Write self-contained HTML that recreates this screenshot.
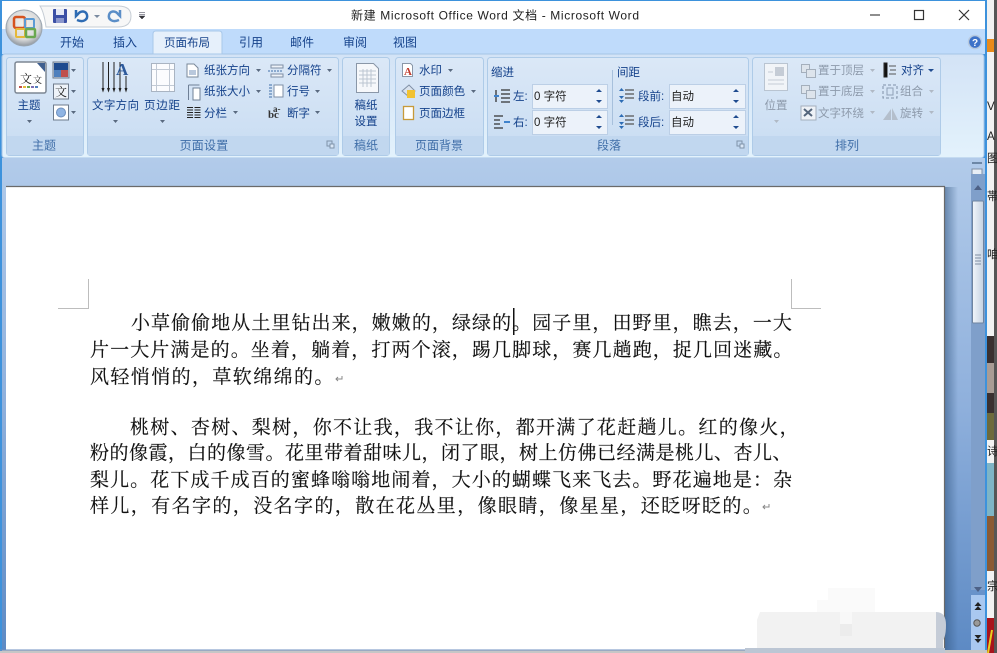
<!DOCTYPE html>
<html><head><meta charset="utf-8"><style>
html,body{margin:0;padding:0;width:997px;height:653px;overflow:hidden;background:#c8c8c8}
svg{position:absolute;left:0;top:0;display:block}
text{font-family:"Liberation Sans","Noto Sans CJK SC",sans-serif;font-size:11.5px;fill:#15428b}
.k{fill:#222}.g{fill:#8d9aab}.l{fill:#3f6ea8;font-size:12px}.c{text-anchor:middle}
.d{font-family:"Liberation Serif","Noto Serif CJK SC",serif;font-size:19px;fill:#111;stroke:#111;stroke-width:.15px}
</style></head><body>
<svg width="997" height="653" viewBox="0 0 997 653" style="filter:blur(.3px)">
<defs>
<linearGradient id="rb" x1="0" y1="0" x2="0" y2="1"><stop offset="0" stop-color="#d3e3f6"/><stop offset="1" stop-color="#e3f2fc"/></linearGradient>
<linearGradient id="gb" x1="0" y1="0" x2="0" y2="1"><stop offset="0" stop-color="#dbe8f7"/><stop offset="1" stop-color="#c8dcf2"/></linearGradient>
<linearGradient id="bg" x1="0" y1="0" x2="0" y2="1"><stop offset="0" stop-color="#b2cbea"/><stop offset=".5" stop-color="#8fb0dc"/><stop offset="1" stop-color="#5d8ac4"/></linearGradient>
<linearGradient id="ed" x1="0" y1="0" x2="1" y2="0"><stop offset="0" stop-color="#31557f" stop-opacity=".55"/><stop offset=".5" stop-color="#31557f" stop-opacity="0"/></linearGradient>
<linearGradient id="th" x1="0" y1="0" x2="1" y2="0"><stop offset="0" stop-color="#f1f5fa"/><stop offset="1" stop-color="#c5d2e2"/></linearGradient>
<radialGradient id="ob" cx=".5" cy=".4" r=".6"><stop offset="0" stop-color="#f4f3ee"/><stop offset=".7" stop-color="#d9dadb"/><stop offset="1" stop-color="#8f969e"/></radialGradient>
</defs>

<!-- right-hand background strip -->
<rect x="986" y="0" width="8" height="653" fill="#f2f2f2"/>
<rect x="986" y="39" width="8" height="13" fill="#e88a1a"/>
<rect x="986" y="336" width="8" height="77" fill="#3a3030"/>
<rect x="986" y="363" width="8" height="30" fill="#a99c95"/>
<rect x="986" y="413" width="8" height="27" fill="#6d6a3c"/>
<rect x="986" y="463" width="8" height="53" fill="#7fb5c6"/>
<rect x="986" y="516" width="8" height="55" fill="#8a5a34"/>
<rect x="986" y="618" width="8" height="35" fill="#a8141c"/>
<path d="M988 653L992 630" stroke="#e8d020" stroke-width="2"/>
<rect x="994" y="0" width="3" height="653" fill="#565656"/>
<text x="987" y="110" class="k" font-size="11">V</text><text x="987" y="140" class="k">A</text><text x="987" y="162" class="k">图</text><text x="987" y="200" class="k">帯</text><text x="987" y="258" class="k">咱</text><text x="987" y="455" class="k">诗</text><text x="987" y="590" class="k">宗</text>

<!-- window -->
<rect x="0" y="0" width="987" height="651" fill="#3d92dc"/>
<rect x="2" y="1" width="983" height="29" fill="#fff"/>
<rect x="2" y="29" width="983" height="25" fill="#bfdbfb"/>
<rect x="2" y="54" width="982" height="104" rx="3" fill="url(#rb)" stroke="#a5c4e6"/>
<rect x="2" y="158" width="983" height="492" fill="url(#bg)"/>
<rect x="945" y="187" width="26" height="463" fill="url(#ed)"/>

<!-- title -->
<text x="351" y="19.500" class="k" font-size="12" textLength="288" lengthAdjust="spacing" style="font-size:12px;fill:#222">新建 Microsoft Office Word 文档 - Microsoft Word</text>
<path d="M870 15h10" stroke="#444" stroke-width="1.200"/>
<rect x="914.500" y="10.500" width="9" height="9" fill="none" stroke="#333" stroke-width="1.200"/>
<path d="M959 10l10 10M969 10l-10 10" stroke="#333" stroke-width="1.200"/>

<!-- QAT -->
<path d="M40 6H118Q131 6 131 16Q131 27 118 27H46Q44 12 40 6Z" fill="#f7f7f7" stroke="#c5ccd4"/>
<rect x="53" y="9" width="14" height="14" rx="1" fill="#3b4fa5"/><rect x="56" y="9" width="8" height="6" fill="#e5e9f5"/><rect x="56" y="18" width="8" height="5" fill="#8b97cc"/>
<path d="M77 20c7 3 11-1 10-5s-6-5-9-1l-2 2v-6" fill="none" stroke="#2f6cb3" stroke-width="2.500"/>
<path d="M94 15h6l-3 3z" fill="#7a8aa0"/>
<path d="M119 20c-7 3-11-1-10-5s6-5 9-1l2 2v-6" fill="none" stroke="#5b8ec7" stroke-width="2.500"/>
<path d="M139 12.500h6M139 14.500h6M139 16h6l-3 3z" fill="#333" stroke="#334" stroke-width=".5"/>

<!-- office button -->
<circle cx="24" cy="28" r="18" fill="url(#ob)" stroke="#9aa5b0"/>
<rect x="14" y="17" width="11" height="11" rx="2" fill="none" stroke="#d6531f" stroke-width="2.500"/>
<rect x="25" y="19" width="9" height="9" rx="1" fill="none" stroke="#5b9bd5" stroke-width="2"/>
<rect x="16" y="29" width="9" height="8" rx="1" fill="none" stroke="#e5b83a" stroke-width="2"/>
<rect x="26" y="29" width="9" height="8" rx="1" fill="none" stroke="#6aa84f" stroke-width="2.500"/>

<!-- tabs -->
<path d="M153 54V34Q153 31 156 31H219Q222 31 222 34V54Z" fill="#e6f0fb" stroke="#a8c8ea"/>
<g style="font-size:12px">
<text x="60" y="46.500" style="font-size:12px">开始</text><text x="113" y="46.500" style="font-size:12px">插入</text>
<text x="164" y="46.500" style="font-size:11.500px">页面布局</text><text x="239" y="46.500" style="font-size:12px">引用</text>
<text x="290" y="46.500" style="font-size:12px">邮件</text><text x="343" y="46.500" style="font-size:12px">审阅</text><text x="393" y="46.500" style="font-size:12px">视图</text>
</g>
<circle cx="975" cy="42" r="6.500" fill="#3d72c8" stroke="#b7c9de" stroke-width="1.500"/><text x="975" y="46" class="c" style="fill:#fff;font-size:10px;font-weight:bold">?</text>

<!-- groups -->
<g stroke="#aecbe8" fill="url(#gb)">
<rect x="6.500" y="57.500" width="77" height="98" rx="3"/>
<rect x="87.500" y="57.500" width="251" height="98" rx="3"/>
<rect x="342.500" y="57.500" width="47" height="98" rx="3"/>
<rect x="395.500" y="57.500" width="88" height="98" rx="3"/>
<rect x="487.500" y="57.500" width="261" height="98" rx="3"/>
<rect x="752.500" y="57.500" width="188" height="98" rx="3"/>
</g>
<g fill="#c1d7ef">
<rect x="7" y="136" width="76" height="19"/><rect x="88" y="136" width="250" height="19"/><rect x="343" y="136" width="46" height="19"/><rect x="396" y="136" width="87" height="19"/><rect x="488" y="136" width="260" height="19"/><rect x="753" y="136" width="187" height="19"/>
</g>
<text x="44" y="149.500" class="l c">主题</text><text x="204" y="149.500" class="l c" style="letter-spacing:.2px">页面设置</text><text x="366" y="149.500" class="l c">稿纸</text><text x="439" y="149.500" class="l c">页面背景</text><text x="609" y="149.500" class="l c">段落</text><text x="847" y="149.500" class="l c">排列</text>
<g fill="none" stroke="#7f93aa"><rect x="327" y="141" width="5" height="5"/><rect x="330" y="144" width="4" height="4" fill="#dbe8f7"/><rect x="737" y="141" width="5" height="5"/><rect x="740" y="144" width="4" height="4" fill="#dbe8f7"/></g>

<!-- group 1 -->
<rect x="15" y="62" width="31" height="31" rx="2" fill="#fff" stroke="#7d8794" stroke-width="1.500"/>
<path d="M37 63h8v9z" fill="#3f5f8f"/>
<text x="20" y="83" class="k" style="font-family:'Liberation Serif','Noto Serif CJK SC',serif;font-size:12px">文</text><text x="33" y="83" class="k" style="font-family:'Liberation Serif','Noto Serif CJK SC',serif;font-size:9px">文</text>
<path d="M19 87h3" stroke="#c0504d" stroke-width="2"/><path d="M23 87h3" stroke="#e5b83a" stroke-width="2"/><path d="M27 87h3" stroke="#6aa84f" stroke-width="2"/><path d="M31 87h3" stroke="#7f6fb5" stroke-width="2"/><path d="M35 87h3" stroke="#4f80bd" stroke-width="2"/>
<text x="29" y="109" class="c">主题</text>
<rect x="53" y="62" width="16" height="16" fill="#c9d6e5" stroke="#6e7b8c"/><rect x="54" y="63" width="7" height="7" fill="#1f4b8f"/><rect x="61" y="63" width="7" height="7" fill="#1f4b8f"/><rect x="54" y="70" width="7" height="7" fill="#4f80bd"/><rect x="61" y="70" width="7" height="7" fill="#c0504d"/>
<rect x="53.500" y="84" width="15" height="15" fill="#eef3f9" stroke="#6e7b8c"/><text x="55" y="96" class="k" style="font-family:'Noto Serif CJK SC',serif;font-size:12px">文</text>
<rect x="53.500" y="105" width="15" height="15" fill="#fff" stroke="#6e7b8c"/><circle cx="61" cy="112.500" r="4.500" fill="#8fb4e3" stroke="#6d8fbd"/>

<!-- group 2 -->
<path d="M103 62v28M108.500 62v28M114 62v28M120 62v28M126 76v14M102 88l1 3 1-3M107.500 88l1 3 1-3M113 88l1 3 1-3M119 88l1 3 1-3M125 88l1 3 1-3" stroke="#222" fill="none"/>
<text x="116" y="75" style="font-family:'Liberation Serif',serif;font-size:17px;font-weight:bold;fill:#2d5a9c">A</text>
<rect x="151.500" y="63.500" width="23" height="28" fill="#fbfcfe" stroke="#a9b4c2"/><path d="M156.500 64v27M169.500 64v27M152 69.500h22M152 85.500h22" stroke="#c2cad5"/>
<text x="92" y="109" textLength="47" style="font-size:11.500px">文字方向</text><text x="144" y="109" textLength="36" style="font-size:11.500px">页边距</text>
<text x="204" y="74">纸张方向</text><text x="204" y="95">纸张大小</text><text x="204" y="117">分栏</text>
<text x="287" y="74">分隔符</text><text x="287" y="95">行号</text><text x="287" y="117">断字</text>
<path d="M187 64h7l4 4v9h-11z" fill="#fff" stroke="#7a8899"/><path d="M189 70h7v5h-7z" fill="#b9c8dc"/>
<path d="M188.500 85h11M188.500 85v15M193 88h7v12h-7z" fill="#fff" stroke="#6f8096"/>
<path d="M187 107.500h6M187 110h6M187 112.500h6M187 115h6M187 117.500h6M194.500 107.500h6M194.500 110h6M194.500 112.500h6M194.500 115h6M194.500 117.500h6" stroke="#222"/>
<path d="M271 65h12v3h-12zM271 74h12v3h-12z" fill="#eef2f8" stroke="#7f8fa5"/><path d="M268 71h15" stroke="#3f6ea8" stroke-dasharray="2 1"/>
<rect x="274" y="85" width="9" height="12" fill="#fff" stroke="#7f8fa5"/><path d="M269 85h3M269 88h3M269 91h3M269 94h3M269 97h3" stroke="#3f6ea8"/>
<text x="268" y="118" style="font-family:'Liberation Serif',serif;font-size:11px;font-weight:bold;fill:#333">b</text><text x="274" y="118" style="font-family:'Liberation Serif',serif;font-size:11px;font-weight:bold;fill:#333">c</text><text x="273" y="112" style="font-family:'Liberation Serif',serif;font-size:9px;font-weight:bold;fill:#333">a-</text>

<!-- group 3 -->
<path d="M356.500 63.500h17l5 5v24h-22z" fill="#f6f8fb" stroke="#8a97a8"/><path d="M359 71h17M359 75h17M359 79h17M359 83h17M363 69v18M367 69v18M371 69v18" stroke="#bcc6d2"/>
<text x="366" y="109" class="c">稿纸</text><text x="366" y="125" class="c">设置</text>

<!-- group 4 -->
<path d="M402.500 63.500h8l2 2v11h-10z" fill="#fff" stroke="#8a97a8"/><text x="404" y="75" style="font-family:'Liberation Serif',serif;font-size:11px;font-weight:bold;fill:#c0392b">A</text>
<path d="M402 91l7-6 6 6-6 6z" fill="#d9e2ee" stroke="#7f8fa5"/><rect x="407" y="90" width="8" height="8" fill="#f1c232"/>
<rect x="403.500" y="106.500" width="10" height="13" fill="#fff" stroke="#c79a3a" stroke-width="1.300"/>
<text x="419" y="74">水印</text><text x="419" y="95" style="letter-spacing:.05px">页面颜色</text><text x="419" y="117">页面边框</text>

<!-- group 5 -->
<text x="491" y="76">缩进</text><text x="617" y="76">间距</text>
<path d="M612.500 70v55" stroke="#a7c0dc"/>
<text x="513" y="100">左:</text><text x="513" y="126">右:</text><text x="638" y="100">段前:</text><text x="638" y="126">段后:</text>
<g fill="#ecf2fa" stroke="#bccfe6"><rect x="532.500" y="84.500" width="75" height="24"/><rect x="532.500" y="110.500" width="75" height="24"/><rect x="669.500" y="84.500" width="76" height="24"/><rect x="669.500" y="110.500" width="76" height="24"/></g>
<text x="534" y="100" class="k">0 字符</text><text x="534" y="126" class="k">0 字符</text><text x="671" y="100" class="k">自动</text><text x="671" y="126" class="k">自动</text>
<path d="M596 92h6l-3-3zM596 100h6l-3 3zM596 118h6l-3-3zM596 126h6l-3 3zM733 92h6l-3-3zM733 100h6l-3 3zM733 118h6l-3-3zM733 126h6l-3 3z" fill="#1f4b8f"/>
<path d="M501 90h9M501 94h9M501 98h9M501 102h9M496 90v12" stroke="#333" stroke-width="1.300"/><path d="M494 96h5" stroke="#3f82cc" stroke-width="2"/>
<path d="M494 116h9M494 120h6M494 124h6M494 128h9" stroke="#333" stroke-width="1.300"/><path d="M504 122h6" stroke="#3f82cc" stroke-width="2"/>
<path d="M625 90h9M625 94h9M625 98h9M625 116h9M625 120h9M625 124h9" stroke="#555" stroke-width="1.300"/>
<path d="M619 91l2.500-3 2.500 3zM619 96l2.500 3 2.500-3zM619 100l2.500 3 2.500-3zM619 117l2.500-3 2.500 3zM619 122l2.500 3 2.500-3zM619 126l2.500 3 2.500-3z" fill="#2d6cb4"/>

<!-- group 6 -->
<rect x="764.500" y="63.500" width="23" height="27" fill="#f1f4f8" stroke="#b9c4d1"/><rect x="775" y="67" width="9" height="9" fill="#c5ccd6"/><path d="M768 80h16M768 84h16M768 72h5" stroke="#c5ccd6"/>
<g fill="#dde4ec" stroke="#a4afbc"><rect x="801.500" y="64.500" width="8" height="8"/><rect x="806.500" y="69.500" width="9" height="8"/><rect x="801.500" y="85.500" width="8" height="8"/><rect x="806.500" y="90.500" width="9" height="8"/></g>
<rect x="801" y="106" width="15" height="14" fill="#eef2f7" stroke="#a4afbc"/><path d="M804 109l8 7M812 109l-8 7" stroke="#54657c" stroke-width="2"/>
<g class="g"><text x="776" y="109" class="c g">位置</text><text x="818" y="74" class="g">置于顶层</text><text x="818" y="95" class="g">置于底层</text><text x="818" y="117" class="g">文字环绕</text><text x="900" y="95" class="g">组合</text><text x="900" y="117" class="g">旋转</text></g>
<text x="901" y="74">对齐</text>
<path d="M885 63v14M884 63h3v14h-3z" stroke="#222"/><path d="M889 66h7M889 74h7M890 70h6" stroke="#555"/>
<rect x="883" y="85" width="14" height="13" fill="none" stroke="#7f90a8" stroke-dasharray="3 2"/><path d="M887 88h6v7h-6z" fill="none" stroke="#8fa0b6"/>
<path d="M883 120l8-11v11zM892 108l6 12h-6z" fill="#b4bfcc"/>

<!-- dropdown arrows -->
<g fill="#5a6a80">
<path d="M27 120h5l-2.500 3zM71 69h5l-2.500 3zM71 90h5l-2.500 3zM71 111h5l-2.500 3zM113 120h5l-2.500 3zM160 120h5l-2.500 3zM256 69h5l-2.500 3zM256 90h5l-2.500 3zM233 111h5l-2.500 3zM327 69h5l-2.500 3zM315 90h5l-2.500 3zM315 111h5l-2.500 3zM448 69h5l-2.500 3zM471 90h5l-2.500 3z"/>
</g>
<path d="M774 120h5l-2.500 3zM870 69h5l-2.500 3zM870 90h5l-2.500 3zM870 111h5l-2.500 3zM929 90h5l-2.500 3zM929 111h5l-2.500 3z" fill="#b0b9c5"/>
<path d="M928 69h6l-3 3z" fill="#1f4b8f"/>

<!-- page -->
<rect x="6" y="186" width="939" height="470" fill="#fff"/>
<path d="M6 186.500H945M944.500 186V650" stroke="#6a6a6a" stroke-width="1.200"/>
<path d="M58 308.500H88.500V279M791.500 279V308.500H821" fill="none" stroke="#bdbdbd"/>

<text class="d" x="131" y="329" style="letter-spacing:1.060px">小草偷偷地从土里钻出来，嫩嫩的，绿绿的。园子里，田野里，瞧去，一大</text>
<text class="d" x="90" y="356" style="letter-spacing:1.100px">片一大片满是的。坐着，躺着，打两个滚，踢几脚球，赛几趟跑，捉几回迷藏。</text>
<text class="d" x="90" y="383" style="letter-spacing:1.400px">风轻悄悄的，草软绵绵的。</text>
<text class="d" x="130" y="433.500" style="letter-spacing:1.300px">桃树、杏树、梨树，你不让我，我不让你，都开满了花赶趟儿。红的像火，</text>
<text class="d" x="90" y="459" style="letter-spacing:.500px">粉的像霞，白的像雪。花里带着甜味儿，闭了眼，树上仿佛已经满是桃儿、杏儿、</text>
<text class="d" x="90" y="486" style="letter-spacing:1.090px">梨儿。花下成千成百的蜜蜂嗡嗡地闹着，大小的蝴蝶飞来飞去。野花遍地是：杂</text>
<text class="d" x="90" y="512" style="letter-spacing:1.400px">样儿，有名字的，没名字的，散在花丛里，像眼睛，像星星，还眨呀眨的。</text>
<path d="M342 376v3h-6M338 377l-2 2 2 2M769 504v3h-6M765 505l-2 2 2 2" fill="none" stroke="#888"/>
<rect x="513" y="308" width="1.500" height="27" fill="#111"/>

<!-- scrollbar -->
<path d="M972 163h10" stroke="#56708f" stroke-width="1.500"/>
<rect x="972" y="169" width="10" height="9" fill="#e8eef5" stroke="#7e8fa5"/>
<rect x="971" y="174" width="14" height="416" fill="#7f9fca"/>
<rect x="971" y="174" width="14" height="26" fill="#7f9fca"/>
<path d="M974 190h8l-4-5z" fill="#4d6186"/>
<rect x="972.500" y="201" width="11" height="122" rx="1" fill="url(#th)" stroke="#6f84a0"/>
<path d="M975 255h6M975 258h6M975 261h6M975 264h6" stroke="#7f8ea3"/>
<path d="M974 587h8l-4 5z" fill="#4d6186"/>
<rect x="971" y="595" width="14" height="55" fill="#a9c8f0"/>
<path d="M974.500 610h7l-3.500-4zM974.500 606h7l-3.500-4z" fill="#222"/>
<circle cx="977" cy="623" r="3.200" fill="#999" stroke="#555"/>
<path d="M974.500 635h7l-3.500 4zM974.500 639h7l-3.500 4z" fill="#222"/>

<!-- bottom / mosaic -->
<rect x="2" y="650" width="985" height="3" fill="#c6c6c6"/>
<path d="M0 650H757" stroke="#6f8fc0"/>
<path d="M817 612V600H828V588H875V612Z" fill="#fafafa"/>
<path d="M757 650V620L760 612H936V650Z" fill="#f2f2f2"/>
<path d="M936 612Q946 612 946 625Q946 636 943 640V650H936Z" fill="#c5ccd7"/>
<rect x="745" y="648" width="200" height="5" fill="#bcc6d4"/>
<rect x="840" y="624" width="12" height="12" fill="#ececec"/><rect x="840" y="612" width="12" height="12" fill="#f8f8f8"/>
</svg>
</body></html>
